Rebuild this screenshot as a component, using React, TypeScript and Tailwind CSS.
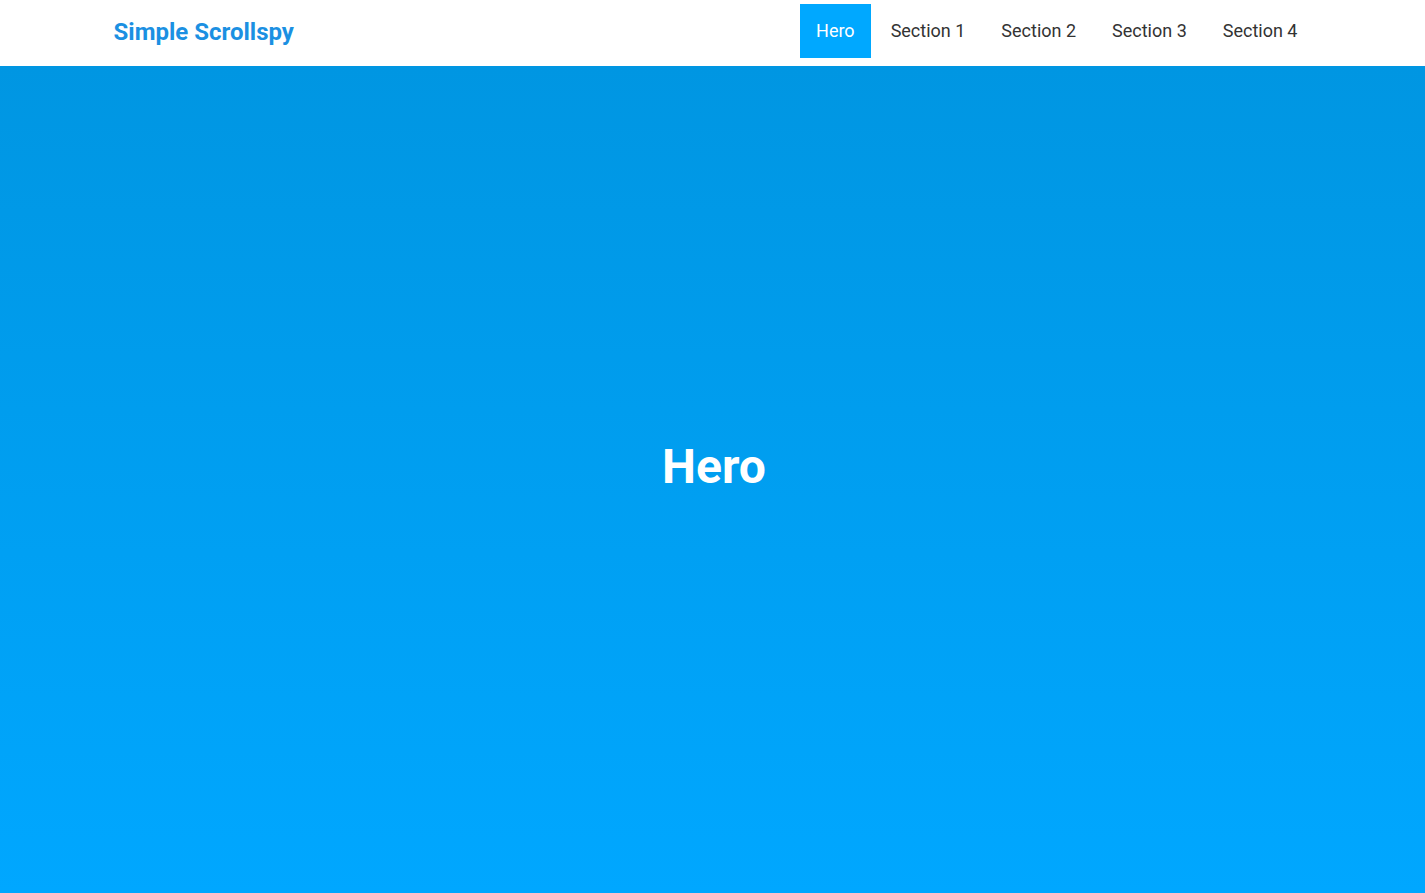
export default function App() {
  const links = ["Hero", "Section 1", "Section 2", "Section 3", "Section 4"];
  return (
    <div className="min-h-screen flex flex-col" style={{ fontFamily: "Roboto, 'Liberation Sans', sans-serif" }}>
      <header className="h-[66px] bg-white flex-none">
        <div className="w-[1200px] mx-auto h-full flex items-center justify-between">
          <div className="text-[24px] font-bold text-[#1b90e2] pl-[1px] mb-[3px]">Simple Scrollspy</div>
          <nav className="flex items-start h-full pt-[4px] mr-[-3px]">
            {links.map((l, i) => (
              <a
                key={l}
                className={
                  i === 0
                    ? "h-[54px] px-[16px] mr-[2px] pb-[2px] flex items-center text-[18px] bg-[#00a8ff] text-white"
                    : "h-[54px] px-[18px] pb-[2px] flex items-center text-[18px] text-[#333333]"
                }
              >
                {l}
              </a>
            ))}
          </nav>
        </div>
      </header>
      <section className="h-[827px] bg-gradient-to-b from-[#0096e2] to-[#00a7ff] flex items-center justify-center">
        <h1 className="text-[48px] font-bold text-white mb-[26px] ml-[3px]">Hero</h1>
      </section>
    </div>
  );
}
